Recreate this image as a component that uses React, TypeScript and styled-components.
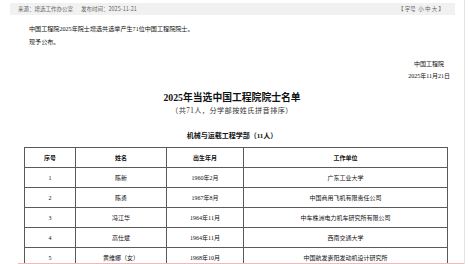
import React from "react";
import styled, { createGlobalStyle } from "styled-components";

const Global = createGlobalStyle`
  html, body { margin: 0; padding: 0; background: #fff; }
  body { font-family: "Noto Sans CJK SC", "Noto Sans", sans-serif; color: #222; }
`;

const Shell = styled.div`
  width: 468px;
  height: 264px;
  overflow: hidden;
  position: relative;
  display: flex;
`;

const Page = styled.div`
  width: 465px;
  border-right: 1px solid #e4e4e4;
  padding-top: 3px;
  box-sizing: border-box;
`;

const InfoBar = styled.div`
  margin: 0 9px 0 10px;
  height: 12px;
  background: #f1f1f1;
  display: flex;
  align-items: center;
  justify-content: space-between;
  padding: 0 11px 0 8px;
  font-size: 5.5px;
  color: #666;
`;

const InfoLeft = styled.div`
  display: flex;
  gap: 8px;
`;

const Lead = styled.div`
  margin-top: 7.5px;
  padding-left: 29px;
  font-family: "Liberation Serif", "Noto Sans CJK SC", serif;
  font-size: 6.1px;
  line-height: 13px;
  color: #111;
`;

const Sign = styled.div`
  margin-top: 9.5px;
  padding-right: 14px;
  display: flex;
  flex-direction: column;
  align-items: flex-end;
  font-family: "Liberation Serif", "Noto Sans CJK SC", serif;
  font-size: 6px;
  line-height: 12px;
  color: #111;
`;

const SignOrg = styled.div`
  margin-right: 6px;
`;

const Title = styled.h1`
  margin: 9px 0 0;
  text-align: center;
  font-family: "Liberation Serif", "Noto Sans CJK SC", serif;
  font-weight: 700;
  font-size: 9.8px;
  line-height: 14px;
  color: #111;
`;

const Sub = styled.div`
  text-align: center;
  font-family: "Liberation Serif", "Noto Sans CJK SC", serif;
  font-size: 7.2px;
  line-height: 12px;
  color: #333;
  letter-spacing: 0.4px;
`;

const Section = styled.h2`
  margin: 13px 0 0;
  text-align: center;
  font-family: "Liberation Serif", "Noto Sans CJK SC", serif;
  font-weight: 700;
  font-size: 7px;
  line-height: 12px;
  color: #111;
`;

const Table = styled.table`
  margin: 5px 0 0 24px;
  width: 419px;
  border-collapse: collapse;
  table-layout: fixed;
  font-family: "Liberation Serif", "Noto Sans CJK SC", serif;
  font-size: 6px;
  color: #111;
`;

const Th = styled.th<{ $w: number }>`
  width: ${(p) => p.$w}px;
  height: 19px;
  padding: 0;
  border: 1px solid #5a5a5a;
  font-family: "Noto Sans CJK SC", sans-serif;
  font-weight: 700;
  text-align: center;
  line-height: 10px;
`;

const Td = styled.td`
  height: 19px;
  padding: 0;
  border: 1px solid #5a5a5a;
  text-align: center;
  line-height: 10px;
`;

const Highlight = styled.div`
  position: absolute;
  left: 18px;
  top: 263px;
  width: 446px;
  height: 1px;
  background: #f2b9bd;
`;

const rows = [
  ["1", "陈新", "1960年2月", "广东工业大学"],
  ["2", "陈勇", "1967年8月", "中国商用飞机有限责任公司"],
  ["3", "冯江华", "1964年11月", "中车株洲电力机车研究所有限公司"],
  ["4", "高仕斌", "1964年11月", "西南交通大学"],
  ["5", "黄维娜（女）", "1968年10月", "中国航发贵阳发动机设计研究所"],
];

export default function App() {
  return (
    <>
      <Global />
      <Shell>
        <Page>
          <InfoBar>
            <InfoLeft>
              <span>来源：增选工作办公室</span>
              <span>发布时间：2025-11-21</span>
            </InfoLeft>
            <span>【 字号&nbsp;&nbsp;小 中 大 】</span>
          </InfoBar>
          <Lead>
            <div>中国工程院2025年院士增选共选举产生71位中国工程院院士。</div>
            <div>现予公布。</div>
          </Lead>
          <Sign>
            <SignOrg>中国工程院</SignOrg>
            <div>2025年11月21日</div>
          </Sign>
          <Title>2025年当选中国工程院院士名单</Title>
          <Sub>（共71人，分学部按姓氏拼音排序）</Sub>
          <Section>机械与运载工程学部（11人）</Section>
          <Table>
            <thead>
              <tr>
                <Th $w={50}>序号</Th>
                <Th $w={90}>姓名</Th>
                <Th $w={76}>出生年月</Th>
                <Th $w={203}>工作单位</Th>
              </tr>
            </thead>
            <tbody>
              {rows.map((r) => (
                <tr key={r[0]}>
                  {r.map((c, i) => (
                    <Td key={i}>{c}</Td>
                  ))}
                </tr>
              ))}
            </tbody>
          </Table>
        </Page>
        <Highlight />
      </Shell>
    </>
  );
}
